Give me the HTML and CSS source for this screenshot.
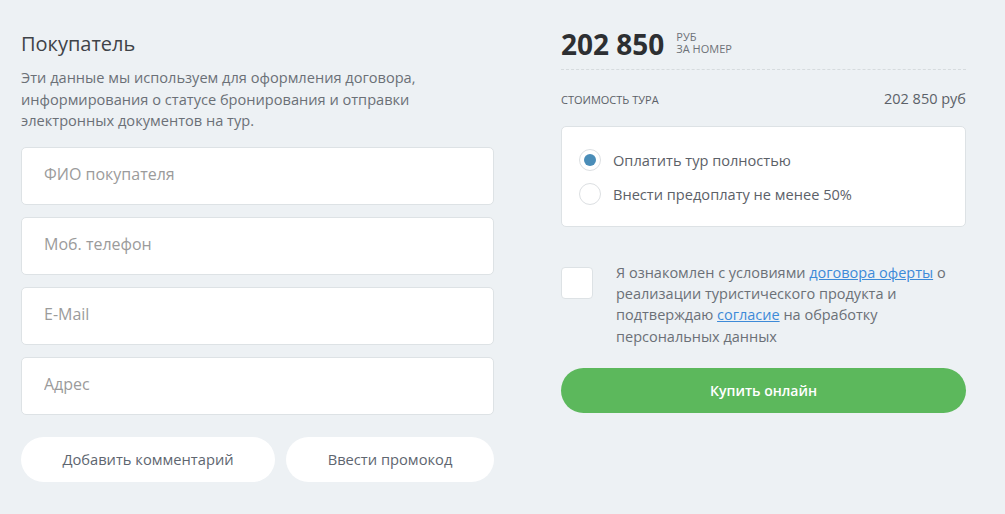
FILE: index.html
```html
<!DOCTYPE html>
<html>
<head>
    <meta charset="utf-8">
    <link rel="stylesheet" href="styles.css">
</head>
<body>
    <div class="order">
        <div class="buyer">
            <h2 class="buyer-title">Покупатель</h2>
            <p class="buyer-note">Эти данные мы используем для оформления договора, информирования о статусе бронирования и отправки электронных документов на тур.</p>
            <div class="fields">
                <input class="field" type="text" placeholder="ФИО покупателя">
                <input class="field" type="text" placeholder="Моб. телефон">
                <input class="field" type="text" placeholder="E-Mail">
                <input class="field" type="text" placeholder="Адрес">
            </div>
            <div class="extra">
                <button class="pill pill-comment">Добавить комментарий</button>
                <button class="pill pill-promo">Ввести промокод</button>
            </div>
        </div>

        <div class="summary">
            <div class="price">
                <span class="price-value">202 850</span>
                <span class="price-unit">РУБ<br>ЗА НОМЕР</span>
            </div>
            <div class="cost-row">
                <span class="cost-label">СТОИМОСТЬ ТУРА</span>
                <span class="cost-value">202 850 руб</span>
            </div>
            <div class="pay-box">
                <label class="pay-option">
                    <span class="radio checked"></span>
                    Оплатить тур полностью
                </label>
                <label class="pay-option">
                    <span class="radio"></span>
                    Внести предоплату не менее 50%
                </label>
            </div>
            <div class="agree">
                <span class="checkbox"></span>
                <p class="agree-text">Я ознакомлен с условиями <a href="#">договора оферты</a> о реализации туристического продукта и подтверждаю <a href="#">согласие</a> на обработку персональных данных</p>
            </div>
            <button class="buy">Купить онлайн</button>
        </div>
    </div>
</body>
</html>
```

FILE: styles.css
```css
body {
    margin: 0;
    background-color: #edf1f4;
    font-family: "Open Sans", Arial, sans-serif;
    color: #5c6168;
}
.order {
    display: flex;
    gap: 67px;
    padding: 30px 0 0 21px;
}
.buyer {
    width: 473px;
}
.buyer-title {
    margin: 0;
    font-size: 20px;
    font-weight: 400;
    line-height: 28px;
    color: #3f4348;
}
.buyer-note {
    margin: 9px 0 15px;
    font-size: 14.6px;
    line-height: 21.5px;
    color: #6b7077;
}
.fields {
    display: flex;
    flex-direction: column;
    gap: 12px;
}
.field {
    box-sizing: border-box;
    height: 58px;
    width: 100%;
    padding: 0 22px 3px;
    border: 1px solid #dde2e5;
    border-radius: 5px;
    background: #fff;
    font-family: inherit;
    font-size: 16px;
    color: #444;
    outline: none;
}
.field::placeholder {
    color: #9b9b9b;
}
.extra {
    display: flex;
    gap: 11px;
    margin-top: 22px;
}
.pill {
    height: 45px;
    border: none;
    border-radius: 23px;
    background: #fff;
    font-family: inherit;
    font-size: 14.7px;
    color: #5e6670;
}
.pill-comment {
    width: 254px;
}
.pill-promo {
    width: 208px;
}
.summary {
    width: 405px;
}
.price {
    display: flex;
    align-items: flex-start;
    gap: 12px;
    height: 39px;
}
.price-value {
    font-size: 28px;
    font-weight: 700;
    line-height: 28px;
    color: #2d2f32;
}
.price-unit {
    font-size: 11px;
    line-height: 12px;
    color: #6d7278;
    margin-top: 1px;
}
.cost-row {
    display: flex;
    justify-content: space-between;
    align-items: center;
    border-top: 1px dashed #d6dbde;
    padding-top: 15px;
    height: 26px;
}
.cost-label {
    font-size: 11px;
    color: #5c6168;
    margin-top: 2px;
}
.cost-value {
    font-size: 14.5px;
    color: #5c6168;
}
.pay-box {
    box-sizing: border-box;
    margin-top: 15px;
    height: 101px;
    border: 1px solid #dde2e5;
    border-radius: 5px;
    background: #fff;
    padding: 22px 17px 0;
    display: flex;
    flex-direction: column;
    gap: 12px;
}
.pay-option {
    display: flex;
    align-items: center;
    gap: 12px;
    font-size: 14.6px;
    color: #5c6168;
    height: 22px;
}
.radio {
    box-sizing: border-box;
    width: 22px;
    height: 22px;
    border: 1px solid #dcdfe2;
    border-radius: 50%;
    display: flex;
    align-items: center;
    justify-content: center;
}
.radio.checked::after {
    content: "";
    width: 12px;
    height: 12px;
    border-radius: 50%;
    background: #4a8db8;
}
.agree {
    display: flex;
    gap: 23px;
    margin-top: 40px;
}
.checkbox {
    flex: none;
    box-sizing: border-box;
    width: 32px;
    height: 32px;
    border: 1px solid #dde2e5;
    border-radius: 4px;
    background: #fff;
}
.agree-text {
    margin: -5px 0 0;
    width: 355px;
    font-size: 14.5px;
    line-height: 21.2px;
    color: #6b7077;
}
.agree-text a {
    color: #3d8ad8;
}
.buy {
    margin-top: 21px;
    width: 405px;
    height: 45px;
    border: none;
    border-radius: 23px;
    background: #5cb85c;
    font-family: inherit;
    font-size: 14px;
    font-weight: 600;
    color: #fff;
}
```
